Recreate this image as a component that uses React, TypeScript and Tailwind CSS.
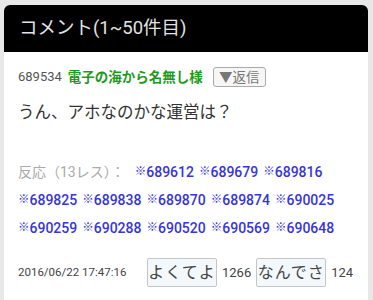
import React from "react";

const links = [
  "689612", "689679", "689816",
  "689825", "689838", "689870", "689874", "690025",
  "690259", "690288", "690520", "690569", "690648",
];

function Ref({ n }: { n: string }) {
  return (
    <span className="h-[28px] flex items-center font-medium text-[#3535dc] text-[14px]">
      <span className="text-[11.5px]">※</span>
      <span>{n}</span>
    </span>
  );
}

export default function App() {
  const font = { fontFamily: '"Roboto", "Noto Sans CJK JP", sans-serif' };
  return (
    <div className="min-h-[300px] bg-[#e8e8e8] pt-[5px] pl-[4px] pr-[5px]" style={font}>
      <div className="rounded-t-[6px] overflow-hidden bg-white h-[295px]">
        <div className="h-[47px] bg-black flex items-center pl-[15px] text-[18.5px] text-[#e2e2e2]">
          コメント(1~50件目)
        </div>
        <div className="pl-[14px] pr-[14px]">
          <div className="mt-[15px] h-[20px] flex items-center">
            <span className="text-[13px] text-[#555]">689534</span>
            <span className="ml-[6px] text-[13.5px] font-bold text-[#1f9a1f]">電子の海から名無し様</span>
            <span className="ml-[10px] h-[20px] w-[53px] flex items-center justify-center border border-[#aaa] rounded-[3px] bg-[#f6f6f6] text-[13.5px] text-[#777]">
              ▼返信
            </span>
          </div>
          <div className="mt-[14px] text-[16.5px] leading-[24px] text-[#333]">
            うん、アホなのかな運営は？
          </div>
          <div className="mt-[33px] flex flex-wrap gap-x-[5px]">
            <span className="h-[28px] flex items-center text-[14px] text-[#aaa] mr-[5px]">反応（13レス）：</span>
            {links.map((n) => (
              <Ref key={n} n={n} />
            ))}
          </div>
          <div className="mt-[16px] flex items-center">
            <span className="w-[129px] text-[11.5px] text-[#444]">2016/06/22 17:47:16</span>
            <span className="h-[29px] w-[70px] flex items-center justify-center border border-[#c6c6c6] rounded-[2px] bg-[#f2f8fc] text-[16px] tracking-[1px] text-[#444]">
              よくてよ
            </span>
            <span className="ml-[5px] text-[13px] text-[#444]">1266</span>
            <span className="ml-[5px] h-[29px] w-[70px] flex items-center justify-center border border-[#c6c6c6] rounded-[2px] bg-[#f2f8fc] text-[16px] tracking-[1px] text-[#444]">
              なんでさ
            </span>
            <span className="ml-[5px] text-[13px] text-[#444]">124</span>
          </div>
        </div>
      </div>
    </div>
  );
}
